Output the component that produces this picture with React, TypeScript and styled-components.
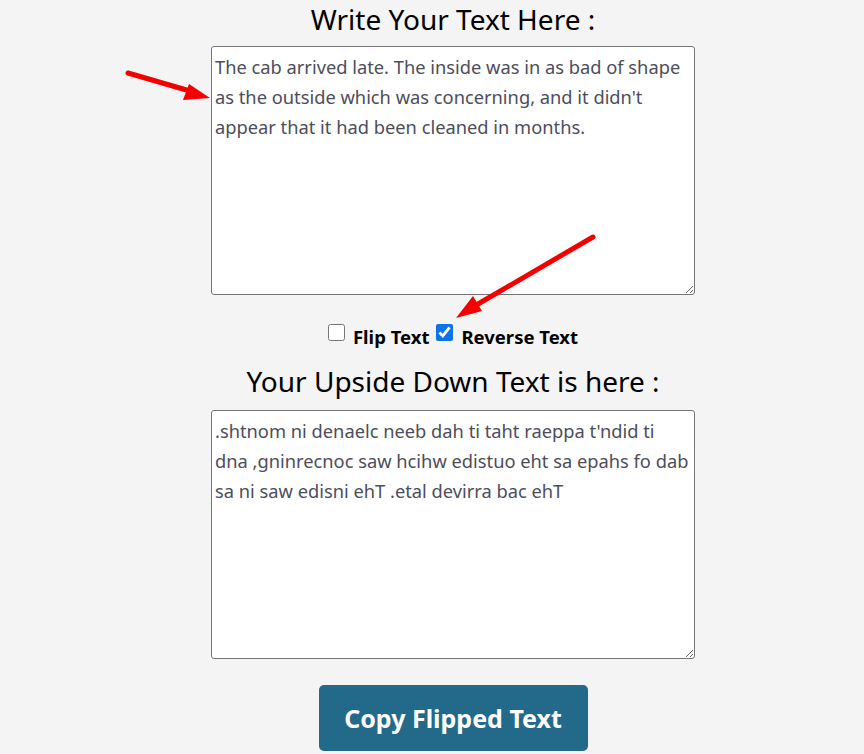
import React, { useState } from "react";
import styled, { createGlobalStyle } from "styled-components";

const GlobalStyle = createGlobalStyle`
  html, body {
    margin: 0;
    padding: 0;
    background: #f4f4f4;
    font-family: "Noto Sans", "Open Sans", sans-serif;
  }
`;

const Page = styled.div`
  position: relative;
  box-sizing: border-box;
  width: 864px;
  height: 754px;
  padding-left: 42px;
  overflow: hidden;

  display: flex;
  flex-direction: column;
  align-items: center;
`;

const Title = styled.h2<{ $top: number }>`
  margin: ${(p) => p.$top}px 0 0 0;
  font-size: 28px;
  font-weight: 400;
  line-height: 36px;
  color: #000;
`;

const TextBox = styled.textarea<{ $top: number }>`
  box-sizing: border-box;
  width: 484px;
  height: 249px;
  margin-top: ${(p) => p.$top}px;
  padding: 5px 4px 2px 3px;
  border: 1px solid #767676;
  border-radius: 3px;
  background: #fff;
  color: #4d4d5c;
  font-family: "Noto Sans", "Open Sans", sans-serif;
  font-size: 18.3px;
  line-height: 30px;
  resize: both;
  outline: none;
`;

const Options = styled.div`
  margin-top: 29px;
  display: flex;
  align-items: baseline;
  gap: 7px;
  font-size: 18.5px;
  font-weight: 700;
  color: #000;
`;

const Option = styled.label`
  display: flex;
  align-items: baseline;
  gap: 8px;

  input {
    width: 17px;
    height: 17px;
    margin: 0;
    accent-color: #0b74e8;
    position: relative;
    top: -3px;
  }
`;

const CopyButton = styled.button`
  margin-top: 26px;
  width: 269px;
  height: 66px;
  border: none;
  border-radius: 5px;
  background: #236a8a;
  color: #fff;
  font-family: "Noto Sans", "Open Sans", sans-serif;
  font-size: 25px;
  font-weight: 700;
  cursor: pointer;
`;

const Annotation = styled.svg`
  position: absolute;
  left: 0;
  top: 0;
  pointer-events: none;
`;

const source =
  "The cab arrived late. The inside was in as bad of shape as the outside which was concerning, and it didn't appear that it had been cleaned in months.";

const App = () => {
  const [text, setText] = useState(source);
  const [flip, setFlip] = useState(false);
  const [reverse, setReverse] = useState(true);
  const output = reverse ? text.split("").reverse().join("") : text;

  return (
    <Page>
      <GlobalStyle />
      <Title $top={1}>Write Your Text Here :</Title>
      <TextBox $top={9} value={text} onChange={(e) => setText(e.target.value)} />
      <Options>
        <Option>
          <input type="checkbox" checked={flip} onChange={() => setFlip(!flip)} />
          Flip Text
        </Option>
        <Option>
          <input type="checkbox" checked={reverse} onChange={() => setReverse(!reverse)} />
          Reverse Text
        </Option>
      </Options>
      <Title $top={14}>Your Upside Down Text is here :</Title>
      <TextBox $top={11} value={output} readOnly />
      <CopyButton>Copy Flipped Text</CopyButton>

      <Annotation width="864" height="754">
        <g stroke="#f50000" strokeWidth="5" strokeLinecap="round" fill="#f50000">
          <line x1="128" y1="73" x2="190" y2="91" />
          <polygon points="210,98 183,100 189,84" stroke="none" />
          <line x1="593" y1="237" x2="478" y2="304" />
          <polygon points="456,318 473,296 482,311" stroke="none" />
        </g>
      </Annotation>
    </Page>
  );
};

export default App;
